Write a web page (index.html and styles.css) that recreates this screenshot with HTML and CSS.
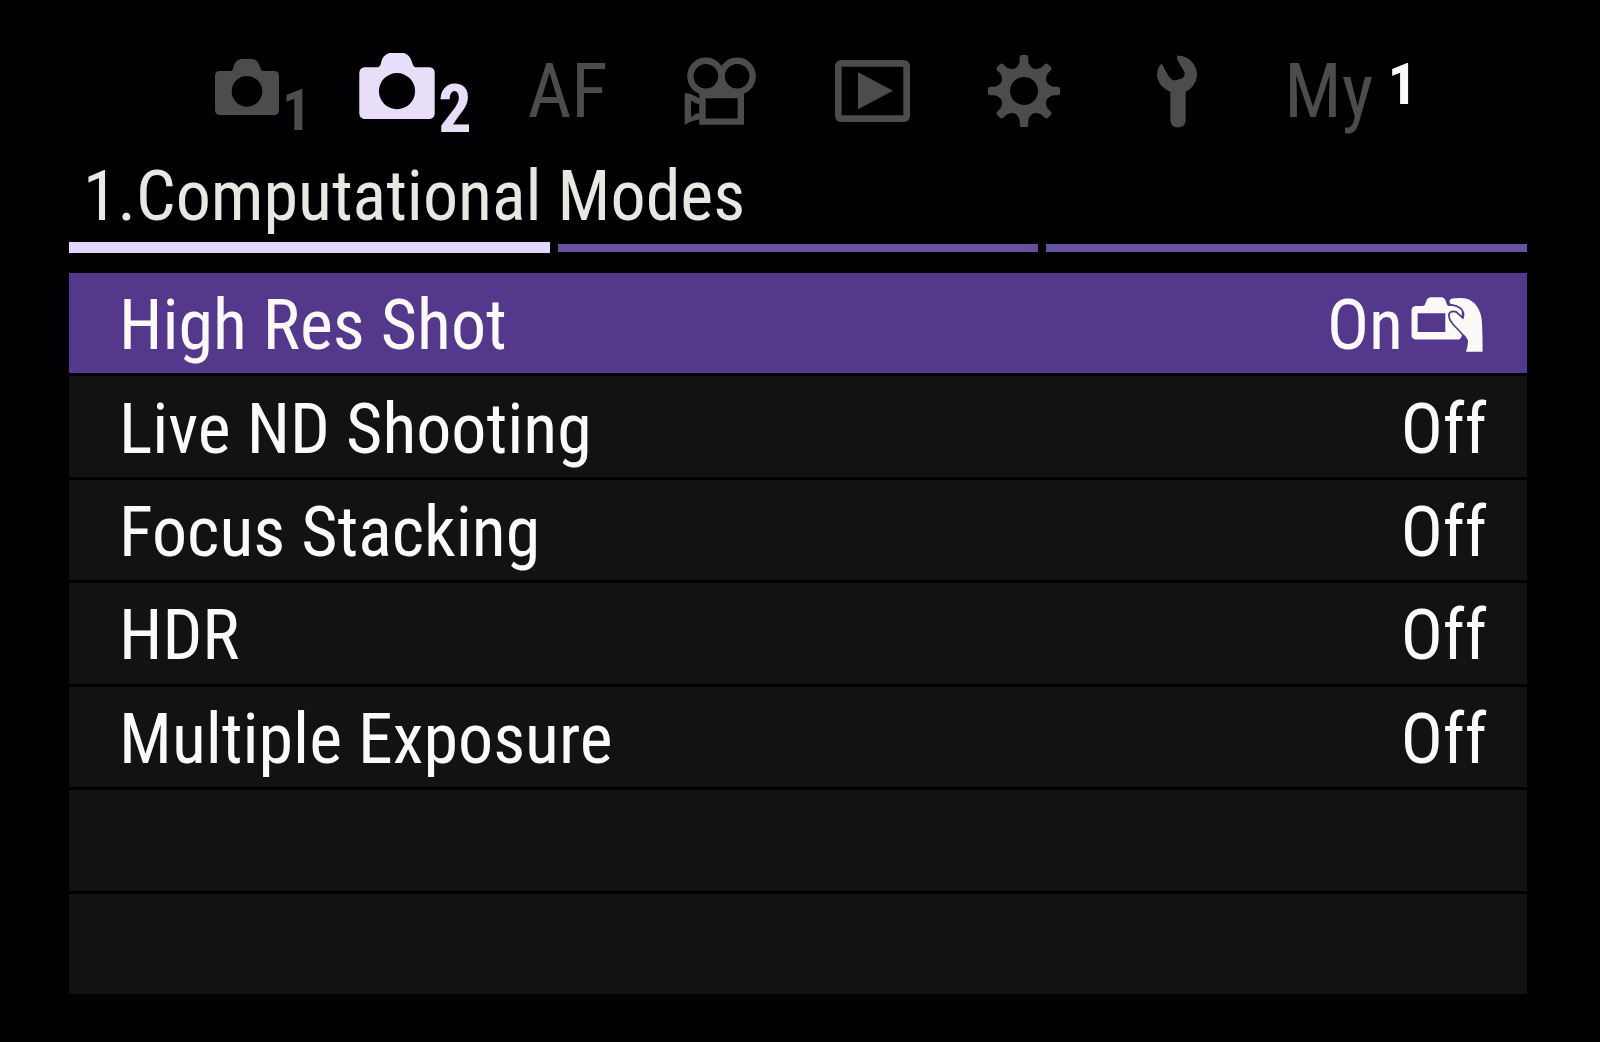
FILE: index.html
```html
<!DOCTYPE html>
<html lang="en">

<head>
    <meta charset="UTF-8">
    <meta name="viewport" content="width=device-width, initial-scale=1.0">
    <title>Computational Modes</title>
    <link rel="stylesheet" href="styles.css">
</head>

<body>

    <!-- shared camera shape for the two shooting tabs -->
    <svg class="symbols" aria-hidden="true">
        <symbol id="camera" viewBox="0 0 192 168">
            <path fill-rule="evenodd" d="M12 36H48Q54 34 56 22Q60 6 76 0H114Q128 4 134 22Q137 34 142 36H180Q192 38 192 50V154Q191 166 180 168H12Q1 166 0 154V50Q1 38 12 36ZM96 51A46 46 0 1 0 96 143A46 46 0 1 0 96 51Z" />
        </symbol>
    </svg>

    <main class="screen">
        <!-- tabs -->
        <nav class="tabs">
            <button class="tab" aria-label="Shooting 1">
                <svg class="icon-camera"><use href="#camera" /></svg>
                <span class="tab-number">1</span>
            </button>
            <button class="tab active" aria-label="Shooting 2">
                <svg class="icon-camera"><use href="#camera" /></svg>
                <span class="tab-number">2</span>
            </button>
            <button class="tab">AF</button>
            <button class="tab" aria-label="Movie">
                <svg class="icon-movie" viewBox="0 0 214 202">
                    <g fill="none" stroke="currentColor" stroke-width="19">
                        <circle cx="65" cy="57" r="46" />
                        <circle cx="158" cy="57" r="46" />
                        <path d="M55 113H169V192H55Z" />
                    </g>
                    <path d="M96 90L112 72L128 90L142 100L176 92V116H46V96L60 98Z" />
                    <path fill-rule="evenodd" d="M2 107L20 110L50 124V184L20 192L2 201ZM21 129L36 138L46 140V168L36 168L21 179Z" />
                </svg>
            </button>
            <button class="tab" aria-label="Playback">
                <svg class="icon-play" viewBox="0 0 225 186">
                    <rect x="10" y="10" width="205" height="166" rx="9" fill="none" stroke="currentColor" stroke-width="20" />
                    <path d="M69 37L174 92L69 148Z" />
                </svg>
            </button>
            <button class="tab" aria-label="Settings">
                <svg class="icon-gear" viewBox="-108 -108 216 216">
                    <defs>
                        <path id="tooth" d="M-9 -108H9L13 -102V-88Q15 -74 32 -64H-32Q-15 -74 -13 -88V-102Z" />
                    </defs>
                    <circle r="57" fill="none" stroke="currentColor" stroke-width="30" />
                    <use href="#tooth" />
                    <use href="#tooth" transform="rotate(45)" />
                    <use href="#tooth" transform="rotate(90)" />
                    <use href="#tooth" transform="rotate(135)" />
                    <use href="#tooth" transform="rotate(180)" />
                    <use href="#tooth" transform="rotate(225)" />
                    <use href="#tooth" transform="rotate(270)" />
                    <use href="#tooth" transform="rotate(315)" />
                </svg>
            </button>
            <button class="tab" aria-label="Setup">
                <svg class="icon-wrench" viewBox="0 0 120 218">
                    <path d="M60 1Q92 2 108 24Q120 40 120 60Q118 92 86 110V197Q83 217 63 217Q43 217 40 197V110Q2 92 0 60Q1 36 14 25L34 62Q40 72 52 76L74 70Q84 64 83 52L61 14Z" />
                </svg>
            </button>
            <button class="tab">My<span class="page-number">1</span></button>
        </nav>

        <h1>1.Computational Modes</h1>

        <div class="pages">
            <span class="page active"></span>
            <span class="page"></span>
            <span class="page"></span>
        </div>

        <!-- menu items -->
        <ul class="menu">
            <li>
                <button class="item selected">
                    <span>High Res Shot</span>
                    <span class="value">On
                        <svg class="icon-handheld" viewBox="0 0 216 166" role="img" aria-label="Handheld">
                            <path fill-rule="evenodd" d="M10 27H34Q40 25 43 14Q46 2 56 1H90Q99 3 102 14Q104 25 110 27H138Q149 30 149 40V114Q147 125 138 126H10Q1 124 0 116V37Q1 29 10 27ZM18 48V104H100V48Z" />
                            <path class="hand" d="M116 3Q130 0 156 1Q174 3 188 17Q204 34 209 58Q213 80 213 165H158Q164 150 165 130Q162 121 154 114L122 80Q108 62 111 50Q117 39 132 44L152 62Q157 48 150 39Q142 27 122 24Q110 23 110 13Q110 6 116 3Z" />
                        </svg>
                    </span>
                </button>
            </li>
            <li>
                <button class="item">
                    <span>Live ND Shooting</span>
                    <span class="value">Off</span>
                </button>
            </li>
            <li>
                <button class="item">
                    <span>Focus Stacking</span>
                    <span class="value">Off</span>
                </button>
            </li>
            <li>
                <button class="item">
                    <span>HDR</span>
                    <span class="value">Off</span>
                </button>
            </li>
            <li>
                <button class="item">
                    <span>Multiple Exposure</span>
                    <span class="value">Off</span>
                </button>
            </li>
            <li class="empty"></li>
            <li class="empty"></li>
        </ul>
    </main>

</body>

</html>
```
FILE: styles.css
```css
* {
    margin: 0;
    padding: 0;
    box-sizing: border-box;
}

body {
    font-family: "Roboto Condensed", Roboto, sans-serif;
    background: #000002;
    color: #fbfaf8;
}

button {
    background: none;
    border: none;
    color: inherit;
    font: inherit;
    cursor: pointer;
}

svg {
    display: block;
    fill: currentColor;
}

.symbols {
    position: absolute;
    width: 0;
    height: 0;
}

.screen {
    display: flex;
    flex-direction: column;
    min-height: 100vh;
    padding: 45px 73px 48px 69px;
}

/* Tabs */
.tabs {
    display: grid;
    grid-template-columns: repeat(8, 1fr);
    padding: 0 122px 0 118px;
    height: 92px;
}

.tab {
    position: relative;
    display: flex;
    justify-content: center;
    align-items: center;
    color: #4c4c4a;
    font-size: 76px;
    line-height: 92px;
}

.tab.active {
    color: #e8defa;
}

.tab-number {
    align-self: flex-end;
    margin-left: 3px;
    font-size: 58px;
    font-weight: bold;
    line-height: 54px;
}

.active .tab-number {
    font-size: 66px;
}

.page-number {
    position: absolute;
    top: 12px;
    right: -12px;
    color: #fbfaf8;
    font-size: 58px;
    font-weight: bold;
    line-height: 54px;
}

.icon-camera {
    align-self: flex-start;
    width: 64px;
    height: 56px;
    margin-top: 14px;
}

.active .icon-camera {
    width: 76px;
    height: 66px;
    margin-top: 8px;
}

.icon-movie {
    width: 72px;
    height: 68px;
}

.icon-play {
    width: 75px;
    height: 62px;
}

.icon-gear {
    width: 72px;
    height: 72px;
}

.icon-wrench {
    width: 40px;
    height: 73px;
}

/* Title and page bar */
h1 {
    padding: 15px 14px 0;
    color: #e8e8e2;
    font-size: 70px;
    font-weight: normal;
    line-height: 88px;
}

.pages {
    display: grid;
    grid-template-columns: repeat(3, 1fr);
    align-items: center;
    gap: 8px;
    margin: 2px 0 20px;
}

.page {
    height: 8px;
    background: #66529a;
}

.page.active {
    height: 11px;
    background: #e2d6fa;
}

/* Menu */
.menu {
    display: grid;
    grid-auto-rows: 1fr;
    flex: 1;
    gap: 3px;
    list-style: none;
}

.item {
    display: flex;
    justify-content: space-between;
    align-items: center;
    width: 100%;
    height: 100%;
    padding: 4px 40px 0 50px;
    background: #121212;
    font-size: 70px;
    line-height: 88px;
}

.item.selected {
    background: #54388c;
}

.empty {
    background: #121212;
}

.value {
    display: flex;
    align-items: center;
    gap: 6px;
}

.icon-handheld {
    width: 78px;
    height: 56px;
}

.hand {
    stroke: #54388c;
    stroke-width: 5;
}
```
